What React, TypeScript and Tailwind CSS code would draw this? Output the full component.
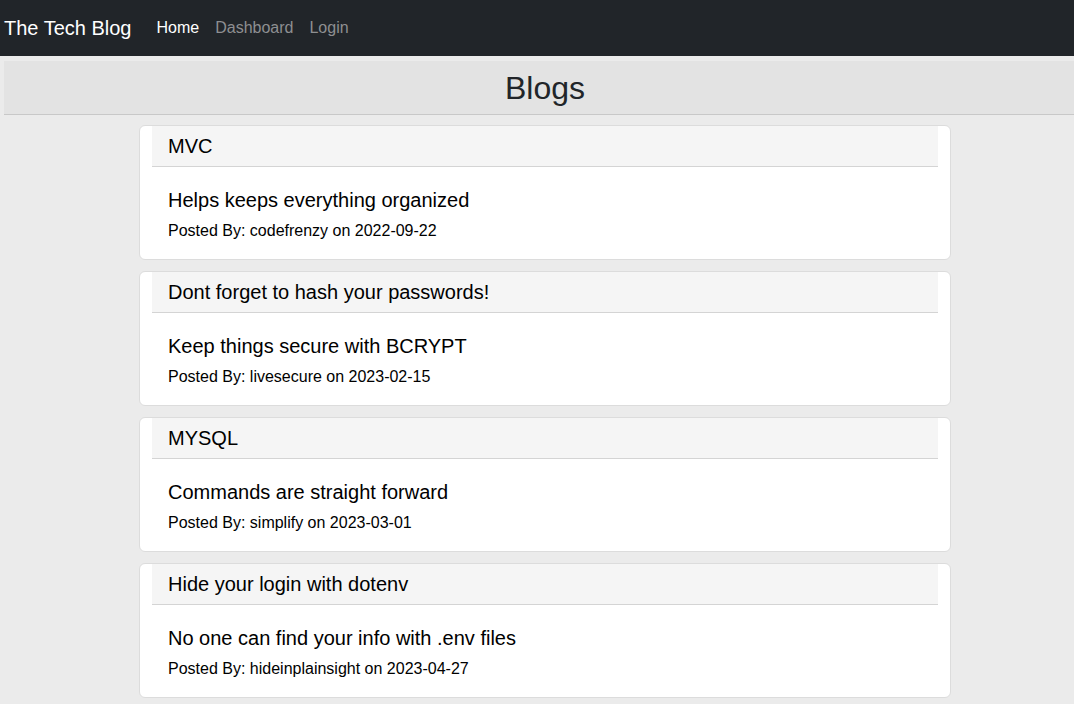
const posts = [
  { title: 'MVC', body: 'Helps keeps everything organized', user: 'codefrenzy', date: '2022-09-22' },
  { title: 'Dont forget to hash your passwords!', body: 'Keep things secure with BCRYPT', user: 'livesecure', date: '2023-02-15' },
  { title: 'MYSQL', body: 'Commands are straight forward', user: 'simplify', date: '2023-03-01' },
  { title: 'Hide your login with dotenv', body: 'No one can find your info with .env files', user: 'hideinplainsight', date: '2023-04-27' },
]

export default function App() {
  return (
    <div className="min-h-[704px] bg-[#ebebeb] font-['Liberation_Sans',Arial,sans-serif] text-black">
      <nav className="h-14 bg-[#212529] flex items-center pl-1">
        <span className="text-xl text-white">The Tech Blog</span>
        <div className="flex items-center gap-4 ml-[25px] text-base">
          <a className="text-white">Home</a>
          <a className="text-[#8e8f91]">Dashboard</a>
          <a className="text-[#8e8f91]">Login</a>
        </div>
      </nav>
      <main className="pl-1 pt-[5px]">
        <header className="h-[54px] bg-[#e3e3e3] border-b border-[#c8c8c8] flex items-center justify-center pl-3">
          <h1 className="text-[32px] text-[#212529]">Blogs</h1>
        </header>
        <div className="w-[812px] ml-[135px] mt-[10px] flex flex-col gap-[11px]">
          {posts.map((post, i) => (
            <div key={i} className="bg-white border border-[#dcdcdc] rounded-md">
              <div className="mx-3 h-[41px] bg-[#f5f5f5] border-b border-[#d4d4d4] flex items-center px-4">
                <h2 className="text-xl">{post.title}</h2>
              </div>
              <div className="px-7 pt-[21px] pb-4">
                <p className="text-xl leading-6 mb-[7px]">{post.body}</p>
                <p className="text-base leading-6">Posted By: {post.user} on {post.date}</p>
              </div>
            </div>
          ))}
        </div>
      </main>
    </div>
  )
}
